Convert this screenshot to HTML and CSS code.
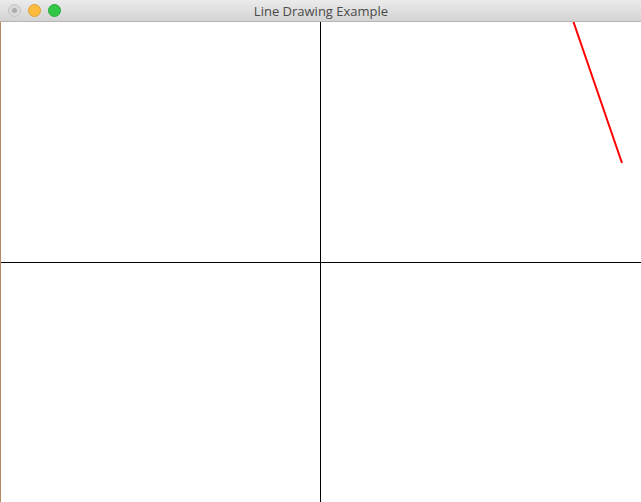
FILE: index.html
```html
<!DOCTYPE html>
<html>
<head>
<meta charset="utf-8">
<link rel="stylesheet" href="styles.css">
</head>
<body>
<div class="window">
  <div class="titlebar">
    <div class="lights">
      <span class="light close"><span class="dot"></span></span>
      <span class="light min"></span>
      <span class="light max"></span>
    </div>
    <div class="title">Line Drawing Example</div>
  </div>
  <div class="content">
    <div class="edge"></div>
    <svg class="canvas" width="640" height="480" viewBox="0 0 640 480">
      <line x1="319.5" y1="0" x2="319.5" y2="480" stroke="#000" stroke-width="1"/>
      <line x1="0" y1="240.5" x2="640" y2="240.5" stroke="#000" stroke-width="1"/>
      <line x1="572.5" y1="0" x2="621" y2="141" stroke="#ff0000" stroke-width="2"/>
    </svg>
  </div>
</div>
</body>
</html>
```
FILE: styles.css
```css
html, body {
  margin: 0;
  padding: 0;
  background: #ffffff;
  overflow: hidden;
}
.window {
  width: 641px;
  height: 502px;
  display: flex;
  flex-direction: column;
}
.titlebar {
  height: 21px;
  border-bottom: 1px solid #b5b5b5;
  background: linear-gradient(#ebebeb, #d3d3d3);
  position: relative;
  display: flex;
  align-items: center;
  justify-content: center;
}
.lights {
  position: absolute;
  left: 8px;
  top: 4px;
  display: flex;
  gap: 7px;
}
.light {
  width: 13px;
  height: 13px;
  border-radius: 50%;
  box-sizing: border-box;
  display: flex;
  align-items: center;
  justify-content: center;
}
.close {
  background: #dadada;
  border: 1px solid #c4c4c4;
}
.close .dot {
  width: 5px;
  height: 5px;
  border-radius: 50%;
  background: #acacac;
}
.min {
  background: #fdbc40;
  border: 1px solid #e0a232;
}
.max {
  background: #33c748;
  border: 1px solid #27a83a;
}
.title {
  font-family: "Open Sans", "Liberation Sans", sans-serif;
  font-size: 13px;
  color: #4a4a4a;
  margin-left: 1px;
}
.content {
  flex: 1;
  display: flex;
}
.edge {
  width: 1px;
  background: #b38a62;
}
.canvas {
  display: block;
}
```
